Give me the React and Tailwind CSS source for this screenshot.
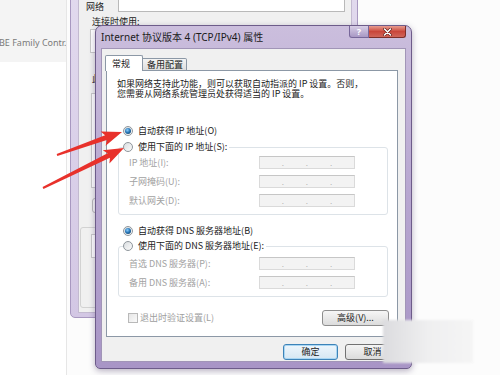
import React from "react";

const Radio = ({ checked }) => (
  <span className="w-[10px] h-[10px] shrink-0 rounded-full border border-[#8f969c] bg-gradient-to-br from-[#d9dde0] to-[#fbfbfb] flex items-center justify-center">
    {checked && (
      <span className="w-[6px] h-[6px] rounded-full bg-[radial-gradient(circle_at_40%_35%,#8fd0ff_0%,#2a78b8_45%,#0b3558_100%)]" />
    )}
  </span>
);

const Field = ({ label }) => (
  <div className="flex items-center justify-between h-[13px]">
    <span className="text-[#a2a2a2] whitespace-nowrap">{label}</span>
    <div className="w-[96px] h-[13px] bg-[#f3f3f3] border border-[#dadada] border-t-[#c6c6c6] flex items-center justify-evenly text-[#b4b4b4] text-[8px] leading-none">
      <span>.</span>
      <span>.</span>
      <span>.</span>
    </div>
  </div>
);

const Arrow = ({ x1, y1, x2, y2 }) => {
  const L = Math.hypot(x2 - x1, y2 - y1);
  const a = (Math.atan2(y2 - y1, x2 - x1) * 180) / Math.PI;
  const pts = `0,-1 ${L - 17},-2.6 ${L - 20},-7.5 ${L},0 ${L - 20},7.5 ${L - 17},2.6 0,1`;
  return (
    <polygon
      points={pts}
      transform={`translate(${x1} ${y1}) rotate(${a})`}
      fill="#e8312b"
    />
  );
};

export default function App() {
  return (
    <div className="relative w-[500px] h-[375px] overflow-hidden bg-[#fcfcfc] font-['Noto_Sans_CJK_SC','Noto_Sans',sans-serif] text-[9px] leading-[10px] text-[#222]">
      {/* left list strip */}
      <div className="absolute left-0 top-0 w-[67px] h-[375px] bg-white border-r border-[#e6e6e6] flex flex-col">
        <div className="h-[62px] bg-[#f4f4f4] flex items-end pb-[13px] overflow-hidden">
          <span className="ml-[-1px] whitespace-nowrap text-[9px] leading-[12px] text-[#7a7a7a] font-['Noto_Sans',sans-serif]">
            BE Family Contr.
          </span>
        </div>
      </div>

      {/* background window */}
      <div className="absolute left-[70px] top-[-20px] w-[288px] h-[338px] rounded-b-[5px] border border-[#a898c0] bg-gradient-to-b from-[#e2daee] to-[#d3c7e4] pt-[14px] pl-[7px] pr-[5px] pb-[4px]">
        <div className="h-full border border-[#c3bad0] bg-[#f0f0f0] flex flex-col">
          <div className="flex items-center h-[16px]">
            <span className="ml-[7px] w-[32px] mt-[6px]">网络</span>
            <div className="w-[227px] h-[16px] bg-white border border-[#b9b9b9]" />
          </div>
          <div className="ml-[13px] mt-[4px] h-[12px] leading-[12px]">连接时使用:</div>
          <div className="ml-[11px] mt-[1px] w-[250px] h-[24px] bg-white border border-[#c9c9c9]" />
          <div className="ml-[13px] mt-[20px] h-[12px] leading-[12px]">此连接使用下列项目:</div>
          <div className="ml-[12px] mt-[8px] w-[250px] h-[95px] bg-white border border-[#c9c9c9]" />
          <div className="ml-[13px] mt-[10px] w-[40px] h-[15px] bg-[#f6f6f6] border border-[#b8b8b8] rounded-[3px]" />
          <div className="ml-[1px] mt-[14px] w-[250px] flex-1 mb-[4px] border border-[#d2d2d2] rounded-[3px] pl-[10px] pt-[6px]">
            <div className="w-[240px] h-[24px] bg-white border border-[#c9c9c9]" />
          </div>
        </div>
      </div>

      {/* main dialog */}
      <div className="absolute left-[95px] top-[25px] w-[317px] h-[344px] rounded-t-[7px] rounded-b-[5px] border border-[#6d5c8a] bg-gradient-to-b from-[#cbbedd] via-[#b7a6d0] to-[#a895c6] shadow-[0_2px_6px_rgba(60,40,90,0.35)] flex flex-col">
        <div className="h-[22px] flex items-start pl-[5px] pr-[5px]">
          <span className="flex-1 mt-[5px] text-[10px] leading-[12px] text-[#1b1b1b] font-['Noto_Sans','Noto_Sans_CJK_SC',sans-serif] whitespace-nowrap">
            Internet 协议版本 4 (TCP/IPv4) 属性
          </span>
          <div className="flex">
            <div className="w-[20px] h-[12px] rounded-bl-[3px] border border-[#77679a] border-t-0 bg-gradient-to-b from-[#d8cee6] to-[#a898c4] flex items-center justify-center text-[9px] leading-none font-bold text-white font-['Noto_Sans',sans-serif]">
              ?
            </div>
            <div className="w-[37px] h-[12px] rounded-br-[3px] border border-[#7c2f2a] border-t-0 border-l-0 bg-gradient-to-b from-[#e79b90] via-[#c9463b] to-[#d0655a] flex items-center justify-center">
              <svg width="9" height="8" viewBox="0 0 9 8">
                <path d="M1.5 1 L7.5 7 M7.5 1 L1.5 7" stroke="#5a1a16" strokeWidth="2.8" strokeLinecap="round" />
                <path d="M1.5 1 L7.5 7 M7.5 1 L1.5 7" stroke="#ffffff" strokeWidth="1.6" strokeLinecap="round" />
              </svg>
            </div>
          </div>
        </div>

        <div className="flex-1 mx-[5px] mb-[6px] border border-[#a195b7] bg-[#f0f0f0] flex flex-col">
          {/* tabs */}
          <div className="flex items-end h-[16px] mt-[6px] ml-[3px] relative z-10">
            <div className="w-[38px] h-[16px] bg-white border border-b-0 border-[#8c98a6] rounded-t-[2px] pl-[6px] pt-[3px]">
              常规
            </div>
            <div className="w-[44px] h-[13px] bg-gradient-to-b from-[#f4f4f4] to-[#dedede] border border-l-0 border-[#8c98a6] rounded-tr-[2px] pl-[4px] pt-[1px]">
              备用配置
            </div>
          </div>

          {/* panel */}
          <div className="-mt-px ml-[4px] w-[292px] h-[267px] bg-white border border-[#8c98a6] flex flex-col">
            <div className="mt-[8px] ml-[10px] whitespace-nowrap flex flex-col">
              <span className="h-[10px] leading-[10px]">如果网络支持此功能，则可以获取自动指派的 IP 设置。否则，</span>
              <span className="h-[10px] leading-[10px]">您需要从网络系统管理员处获得适当的 IP 设置。</span>
            </div>

            <div className="mt-[25px] ml-[16px] h-[14px] flex items-center gap-[5px]">
              <Radio checked />
              <span>自动获得 IP 地址(O)</span>
            </div>

            <div className="relative mt-[9px] ml-[11px] mr-[9px] h-[68px] border border-[#dde3e8] rounded-[3px] pl-[10px] pr-[32px] pt-[8px] flex flex-col gap-[6px]">
              <div className="absolute left-[4px] top-[-8px] h-[14px] flex items-center gap-[5px] bg-white pr-[2px]">
                <Radio />
                <span>使用下面的 IP 地址(S):</span>
              </div>
              <Field label="IP 地址(I):" />
              <Field label="子网掩码(U):" />
              <Field label="默认网关(D):" />
            </div>

            <div className="mt-[9px] ml-[16px] h-[14px] flex items-center gap-[5px]">
              <Radio checked />
              <span>自动获得 DNS 服务器地址(B)</span>
            </div>

            <div className="relative mt-[8px] ml-[11px] mr-[9px] h-[51px] border border-[#dde3e8] rounded-[3px] pl-[10px] pr-[32px] pt-[10px] flex flex-col gap-[6px]">
              <div className="absolute left-[4px] top-[-8px] h-[14px] flex items-center gap-[5px] bg-white pr-[2px]">
                <Radio />
                <span>使用下面的 DNS 服务器地址(E):</span>
              </div>
              <Field label="首选 DNS 服务器(P):" />
              <Field label="备用 DNS 服务器(A):" />
            </div>

            <div className="mt-[13px] h-[16px] pl-[21px] pr-[8px] flex items-center justify-between">
              <div className="flex items-center gap-[2px]">
                <span className="w-[10px] h-[10px] border border-[#b9b9b9] bg-gradient-to-br from-[#e6e6e6] to-[#fafafa]" />
                <span className="text-[#9e9e9e]">退出时验证设置(L)</span>
              </div>
              <div className="w-[67px] h-[16px] border border-[#8e8e8e] rounded-[3px] bg-gradient-to-b from-[#f6f6f6] to-[#dcdcdc] flex items-center justify-center">
                高级(V)...
              </div>
            </div>
          </div>

          {/* buttons */}
          <div className="mt-[7px] mr-[5px] flex justify-end gap-[7px]">
            <div className="w-[55px] h-[16px] border border-[#3d83b8] rounded-[3px] bg-gradient-to-b from-[#eef6fc] to-[#d6e7f3] shadow-[inset_0_0_0_1px_#a9d6f3] flex items-center justify-center">
              确定
            </div>
            <div className="w-[55px] h-[16px] border border-[#727272] rounded-[3px] bg-gradient-to-b from-[#f4f4f4] to-[#dbdbdb] flex items-center justify-center">
              取消
            </div>
          </div>
        </div>
      </div>

      {/* watermark cover */}
      <div className="absolute left-[383px] top-[320px] w-[90px] h-[43px] bg-gradient-to-r from-[#dcdcdf] via-[#efeff0] to-[#f5f5f5] blur-[1px]" />

      {/* arrows */}
      <svg className="absolute left-0 top-0 pointer-events-none" width="500" height="375">
        <Arrow x1={57} y1={155} x2={122} y2={132} />
        <Arrow x1={43} y1={188} x2={124} y2={148} />
      </svg>
    </div>
  );
}
